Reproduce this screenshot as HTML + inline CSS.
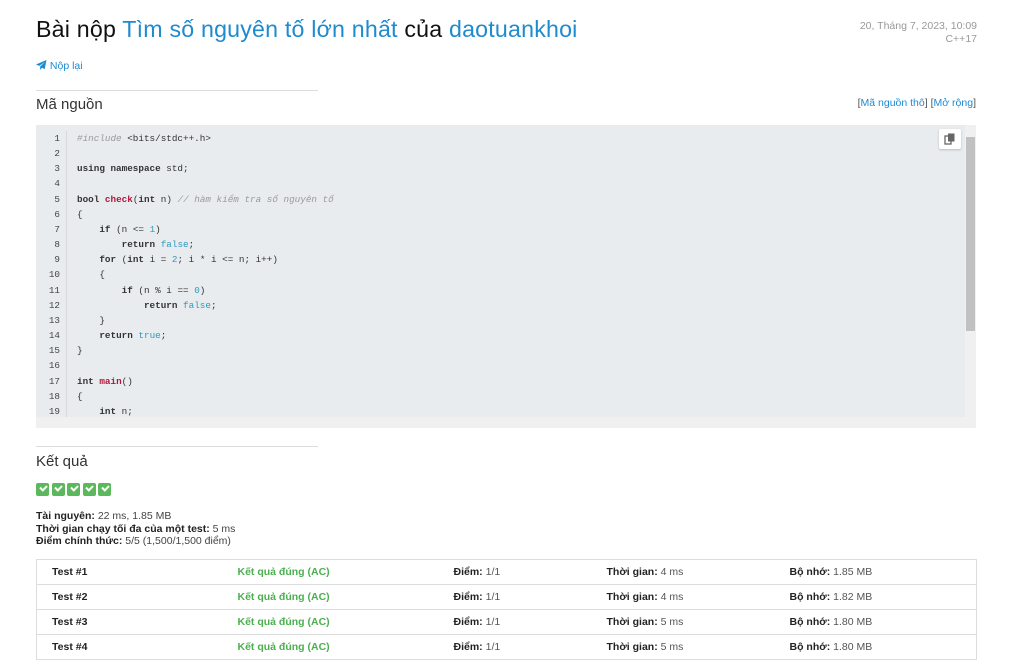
<!DOCTYPE html>
<html><head><meta charset="utf-8"><style>
body{margin:0;background:#fff;font-family:"Liberation Sans",sans-serif;color:#222;width:1024px;height:650px;overflow:hidden;position:relative}
a{color:#1b8ad3;text-decoration:none}
.abs{position:absolute}
h1{position:absolute;left:36px;top:16px;margin:0;font-size:23.2px;font-weight:normal;color:#111;letter-spacing:0.2px;white-space:nowrap}
h1 a{color:#1e8bcf}
.meta{right:47px;top:20px;text-align:right;font-size:10.5px;color:#999;line-height:13px}
.hr{left:36px;width:282px;height:1px;background:#ddd}
h2{position:absolute;margin:0;font-size:15px;font-weight:normal;color:#333;left:36px}
.code{left:36px;top:125px;width:940px;height:303px;background:#e9ecef;overflow:hidden}
.lines{position:absolute;left:0;top:6px;font-family:"Liberation Mono",monospace;font-size:9.3px;color:#333}
.lines div{height:15.17px;line-height:15.17px;white-space:pre}
.n{display:inline-block;width:24px;text-align:right;color:#444;padding-right:6px;border-right:1px solid #d8d8d8;margin-right:10px}
.k{font-weight:bold;color:#333}.f{color:#b0173a;font-weight:bold}.c{color:#999;font-style:italic}.v{color:#2a9bbd}
table{position:absolute;left:36px;top:559px;width:941px;border-collapse:collapse;font-size:10.5px;border:1px solid #ddd;table-layout:fixed}
td{height:24px;border-top:1px solid #ddd;padding:0;color:#555;white-space:nowrap}
td b{color:#222}
.ac{color:#4caf50;font-weight:bold}
.chk{display:inline-block;width:13px;height:13px;background:#5cb85c;border-radius:2px;margin-right:2.6px;position:relative}
.chk:after{content:"";position:absolute;left:3.5px;top:2px;width:5px;height:3px;border-left:2px solid #fff;border-bottom:2px solid #fff;transform:rotate(-45deg)}
.info{left:36px;top:510px;font-size:10.5px;line-height:12.5px;color:#444}
.info b{color:#222}
</style></head><body>
<h1>Bài nộp <a>Tìm số nguyên tố lớn nhất</a> của <a>daotuankhoi</a></h1>
<div class="abs meta">20, Tháng 7, 2023, 10:09<br>C++17</div>
<div class="abs" style="left:36px;top:60px;font-size:10.5px;color:#1b8ad3"><svg width="11" height="10" viewBox="0 0 12 11" style="vertical-align:-1px"><path d="M11.5 0L0 5l3.5 1.5L10 2 4.5 7.2V11l2-2.5 3 1.5z" fill="#1b8ad3"/></svg> Nộp lại</div>
<div class="abs hr" style="top:90px"></div>
<h2 style="top:96px">Mã nguồn</h2>
<div class="abs" style="right:48px;top:97px;font-size:10.5px;color:#555">[<a>Mã nguồn thô</a>] [<a>Mở rộng</a>]</div>
<div class="abs code">
<div class="lines"><div><span class="n">1</span><span class="c">#include</span> &lt;bits/stdc++.h&gt;</div><div><span class="n">2</span></div><div><span class="n">3</span><span class="k">using namespace</span> std;</div><div><span class="n">4</span></div><div><span class="n">5</span><span class="k">bool</span> <span class="f">check</span>(<span class="k">int</span> n) <span class="c">// hàm kiểm tra số nguyên tố</span></div><div><span class="n">6</span>{</div><div><span class="n">7</span>    <span class="k">if</span> (n &lt;= <span class="v">1</span>)</div><div><span class="n">8</span>        <span class="k">return</span> <span class="v">false</span>;</div><div><span class="n">9</span>    <span class="k">for</span> (<span class="k">int</span> i = <span class="v">2</span>; i * i &lt;= n; i++)</div><div><span class="n">10</span>    {</div><div><span class="n">11</span>        <span class="k">if</span> (n % i == <span class="v">0</span>)</div><div><span class="n">12</span>            <span class="k">return</span> <span class="v">false</span>;</div><div><span class="n">13</span>    }</div><div><span class="n">14</span>    <span class="k">return</span> <span class="v">true</span>;</div><div><span class="n">15</span>}</div><div><span class="n">16</span></div><div><span class="n">17</span><span class="k">int</span> <span class="f">main</span>()</div><div><span class="n">18</span>{</div><div><span class="n">19</span>    <span class="k">int</span> n;</div></div>
<div class="abs" style="left:0;top:292px;width:940px;height:11px;background:#f0f0f0"></div>
<div class="abs" style="left:929px;top:0;width:11px;height:292px;background:#f0f0f0"></div>
<div class="abs" style="left:930px;top:12px;width:9px;height:194px;background:#c1c1c1"></div>
<div class="abs" style="left:903px;top:4px;width:22px;height:20px;background:#fff;border-radius:2px;box-shadow:0 1px 2px #bbb"><svg width="12" height="12" viewBox="0 0 12 12" style="position:absolute;left:5px;top:4px"><rect x="1" y="3" width="6" height="8" fill="none" stroke="#666" stroke-width="1.3"/><rect x="4" y="0.5" width="6.5" height="8" fill="#666"/></svg></div>
</div>
<div class="abs hr" style="top:446px"></div>
<h2 style="top:453px">Kết quả</h2>
<div class="abs" style="left:36px;top:483px;font-size:0"><span class="chk"></span><span class="chk"></span><span class="chk"></span><span class="chk"></span><span class="chk"></span></div>
<div class="abs info"><b>Tài nguyên:</b> 22 ms, 1.85 MB<br><b>Thời gian chạy tối đa của một test:</b> 5 ms<br><b>Điểm chính thức:</b> 5/5 (1,500/1,500 điểm)</div>
<table>
<colgroup><col style="width:201px"><col style="width:216px"><col style="width:153px"><col style="width:183px"><col></colgroup>
<tr><td style="padding-left:15px"><b>Test #1</b></td><td class="ac">Kết quả đúng (AC)</td><td><b>Điểm:</b> 1/1</td><td><b>Thời gian:</b> 4 ms</td><td><b>Bộ nhớ:</b> 1.85 MB</td></tr>
<tr><td style="padding-left:15px"><b>Test #2</b></td><td class="ac">Kết quả đúng (AC)</td><td><b>Điểm:</b> 1/1</td><td><b>Thời gian:</b> 4 ms</td><td><b>Bộ nhớ:</b> 1.82 MB</td></tr>
<tr><td style="padding-left:15px"><b>Test #3</b></td><td class="ac">Kết quả đúng (AC)</td><td><b>Điểm:</b> 1/1</td><td><b>Thời gian:</b> 5 ms</td><td><b>Bộ nhớ:</b> 1.80 MB</td></tr>
<tr><td style="padding-left:15px"><b>Test #4</b></td><td class="ac">Kết quả đúng (AC)</td><td><b>Điểm:</b> 1/1</td><td><b>Thời gian:</b> 5 ms</td><td><b>Bộ nhớ:</b> 1.80 MB</td></tr>
</table>
</body></html>
